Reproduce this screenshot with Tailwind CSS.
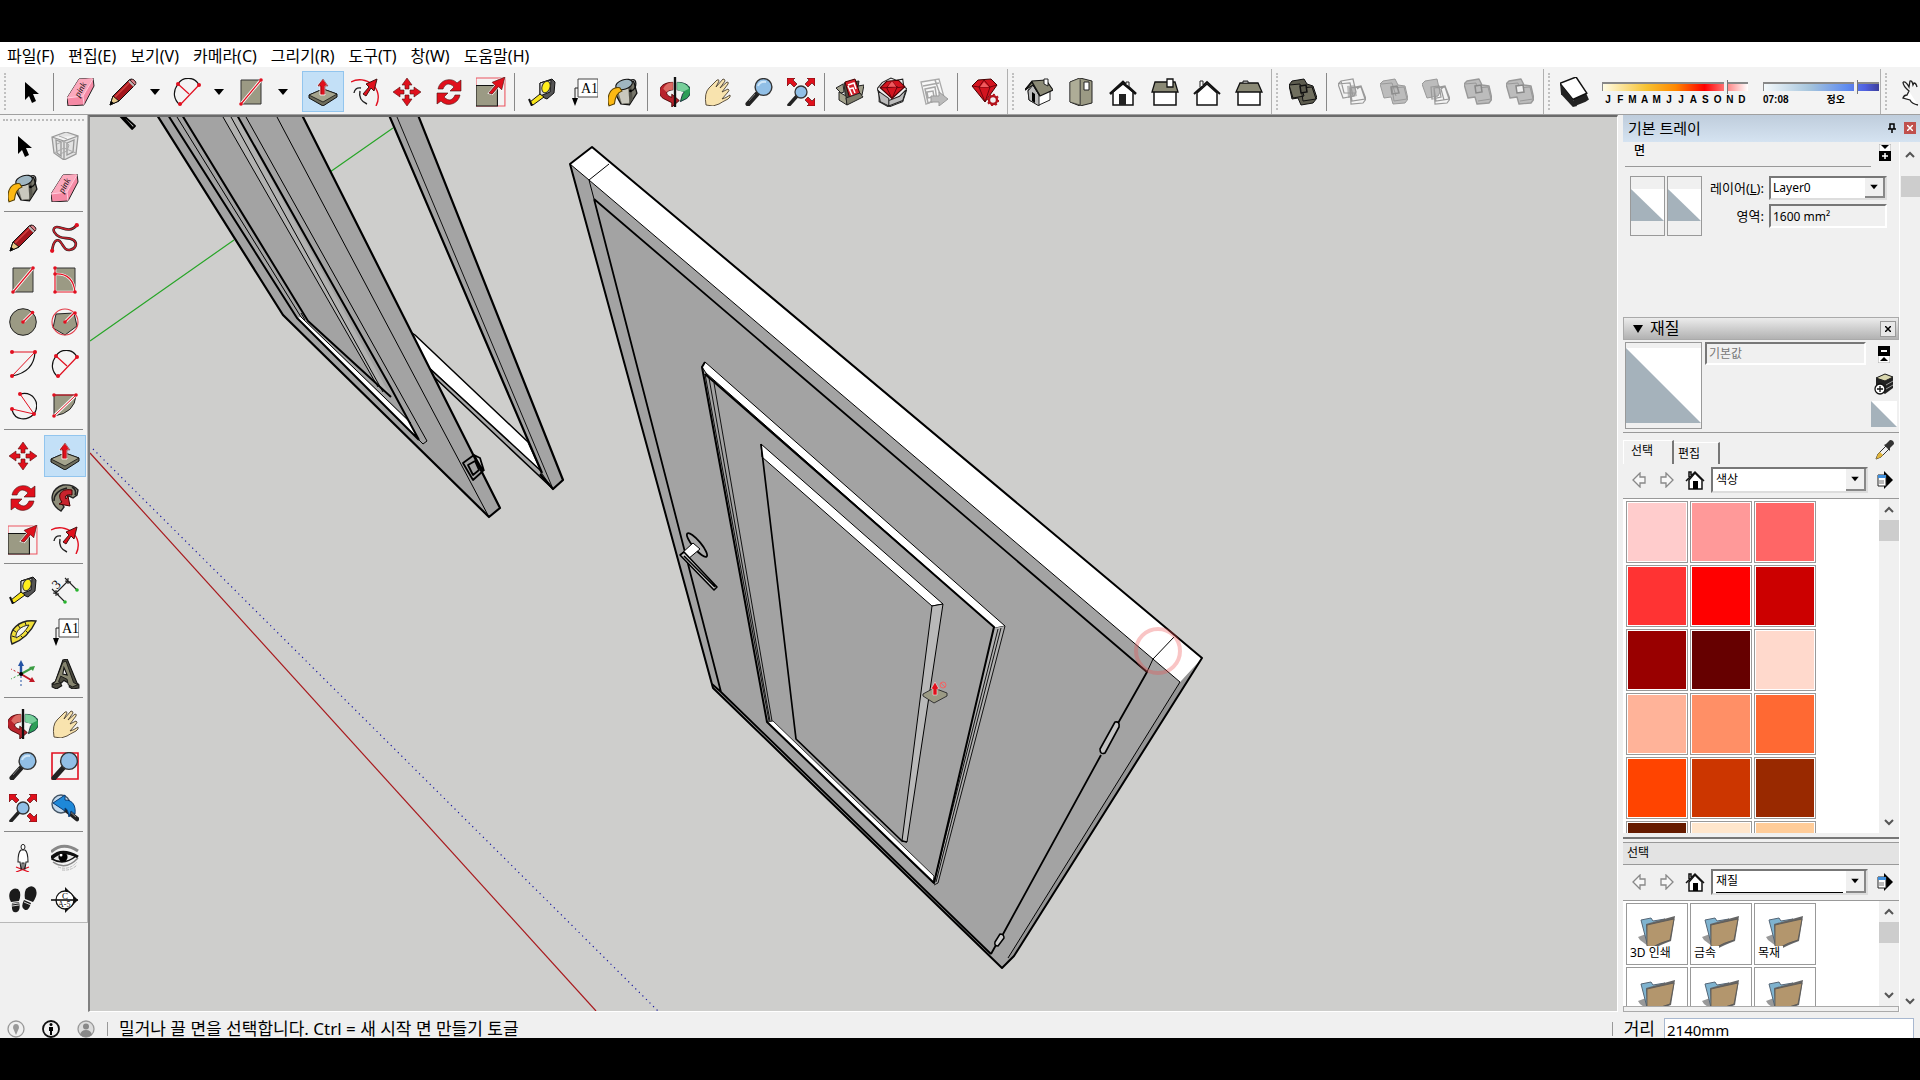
<!DOCTYPE html>
<html lang="ko">

<head>
    <meta charset="UTF-8">
    <meta name="viewport" content="width=device-width, initial-scale=1.0">
    <title>SketchUp</title>
    <script src="https://cdn.jsdelivr.net/npm/@tailwindcss/browser@4"></script>
</head>

<body class="h-screen flex flex-col overflow-hidden bg-black text-black font-['Noto_Sans','Noto_Sans_CJK_KR',sans-serif]">
    <!-- Icon set -->
    <svg class="hidden">
        <symbol id="cursor" viewBox="0 0 28 28"><path d="M9 4v18l4-4 3 7 4-2-3-7h6z" fill="#000" /></symbol>
        <symbol id="eraser" viewBox="0 0 28 28">
            <path d="M12 1l14-1 1 8-10 19-16 1-1-8z" fill="#f58aa5" stroke="#222" stroke-linejoin="round" />
            <path d="M12 1l14 -1-10 18-16 2z" fill="#fba9bd" /><path d="M0 20l16-2 1 9" fill="none" stroke="#fcd" />
            <path d="M16 18l10-17" stroke="#fcd" />
            <text x="7" y="17" font-size="9" font-style="italic" font-family="Liberation Serif" transform="rotate(-62 12 14)">pink</text>
        </symbol>
        <symbol id="pencil" viewBox="0 0 28 28">
            <path d="M1 27l3-9 16-16q2-2 5 0t1 5L10 23z" fill="#a3161d" stroke="#111" stroke-linejoin="round" />
            <path d="M1 27l3-9 6 5z" fill="#e8ca8b" stroke="#111" /><path d="M1 27l1-4 3 2z" /><path d="M6 19L20 5" stroke="#d4403f" stroke-width="1.500" />
            <path d="M20 3l5 5" stroke="#bbb" stroke-width="2" /><path d="M21 2q3-2 5 1t0 4z" fill="#dd838a" stroke="#111" stroke-width=".6" />
        </symbol>
        <symbol id="freehand" viewBox="0 0 28 28">
            <path d="M2 26C3 16 7 14 10 18s4 8 9 7 7-6 3-9-9-1-13-3S1 6 5 4s13 7 20-2" fill="none" stroke="#222" stroke-width="2.400" />
            <path d="M2 26C3 16 7 14 10 18s4 8 9 7 7-6 3-9-9-1-13-3S1 6 5 4s13 7 20-2" fill="none" stroke="#c4202b" stroke-width="1.400" />
            <circle cx="2" cy="26" r="2" fill="#e11020" /><circle cx="25" cy="2" r="2" fill="#e11020" />
        </symbol>
        <symbol id="arc2" viewBox="0 0 28 28">
            <path d="M5 6A12 12 0 0 1 26 7M5 6C-1 14 1 22 7 27" fill="none" stroke="#111" stroke-width="1.2" />
            <path d="M5 6l11 10M26 7L7 27" stroke="#e11020" stroke-width="1.2" />
            <circle cx="5" cy="6" r="2" fill="#e11020" /><circle cx="26" cy="7" r="2" fill="#e11020" /><circle cx="7" cy="26" r="2" fill="#e11020" />
        </symbol>
        <symbol id="rect" viewBox="0 0 28 28">
            <path d="M4 2h20v24H4z" fill="#9b9a84" stroke="#333" /><path d="M4 26L24 2" stroke="#fff" stroke-width="3" /><path d="M4 26L24 2" stroke="#e11020" stroke-width="1.2" />
            <circle cx="4" cy="26" r="1.8" fill="#e11020" /><circle cx="24" cy="2" r="1.8" fill="#e11020" />
        </symbol>
        <symbol id="rotrect" viewBox="0 0 28 28">
            <path d="M4 2h20v24H4z" fill="#9b9a84" stroke="#333" /><path d="M4 2v24h20M4 8q18-1 20 18" fill="none" stroke="#fff" stroke-width="2.6" /><path d="M4 2v24h20M4 8q18-1 20 18" fill="none" stroke="#e11020" stroke-width="1.2" />
            <g fill="#e11020"><circle cx="4" cy="2" r="1.8" /><circle cx="4" cy="8" r="1.8" /><circle cx="4" cy="26" r="1.8" /><circle cx="24" cy="26" r="1.8" /></g>
        </symbol>
        <symbol id="circle" viewBox="0 0 28 28">
            <circle cx="14" cy="14" r="13.3" fill="#9b9a84" stroke="#222" /><path d="M14 14l9-9" stroke="#fff" stroke-width="3" /><path d="M14 14l9-9" stroke="#e11020" stroke-width="1.3" />
            <circle cx="14" cy="14" r="1.8" fill="#e11020" /><circle cx="23.500" cy="4.500" r="1.8" fill="#e11020" />
        </symbol>
        <symbol id="polygon" viewBox="0 0 28 28">
            <path d="M23 5l3 13-12 9-12-7L5 6z" fill="#9b9a84" stroke="#222" /><circle cx="14" cy="14" r="13" fill="none" stroke="#e33b48" stroke-width="1.1" />
            <path d="M14 14l9-9" stroke="#fff" stroke-width="3" /><path d="M14 14l9-9" stroke="#e11020" stroke-width="1.3" /><circle cx="14" cy="14" r="1.8" fill="#e11020" /><circle cx="24" cy="5" r="1.8" fill="#e11020" />
        </symbol>
        <symbol id="arc1" viewBox="0 0 28 28">
            <path d="M26 2Q25 22 3 26" fill="none" stroke="#111" stroke-width="1.2" /><path d="M3 2h23L3 26" fill="none" stroke="#e11020" />
            <g fill="#e11020"><circle cx="3" cy="2" r="2" /><circle cx="26" cy="2" r="2" /><circle cx="3" cy="26" r="2" /></g>
        </symbol>
        <symbol id="arc3" viewBox="0 0 28 28">
            <path d="M11 2C24-1 32 11 25 22M25 22C18 29 6 29 3 18" fill="none" stroke="#111" stroke-width="1.2" /><path d="M11 2l14 20L3 17" fill="none" stroke="#e11020" />
            <g fill="#e11020"><circle cx="11" cy="2" r="2" /><circle cx="25" cy="22" r="2" /><circle cx="3" cy="17" r="2" /></g>
        </symbol>
        <symbol id="pie" viewBox="0 0 28 28">
            <path d="M3 3h22Q24 21 3 24z" fill="#9b9a84" stroke="#222" /><path d="M3 24L25 3" stroke="#fff" stroke-width="3" /><path d="M25 3H3M3 24L25 3" fill="none" stroke="#e11020" />
            <g fill="#e11020"><circle cx="3" cy="3" r="1.8" /><circle cx="25" cy="3" r="1.8" /><circle cx="3" cy="24" r="1.8" /></g>
        </symbol>
        <symbol id="pushpull" viewBox="0 0 28 28">
            <path d="M0 17l14-6 14 5v3L14 28 0 20z" fill="#6e6d5c" stroke="#111" stroke-linejoin="round" /><path d="M0 17l14-6 14 5-14 8z" fill="#a5a48d" stroke="#111" stroke-width=".8" />
            <path d="M14 1l5 7h-3v9h-5V8H8z" fill="#e0101c" stroke="#fff" stroke-width=".8" /><path d="M14 1l5 7h-3v8M14 1L9 8h3v8" fill="none" stroke="#500" stroke-width=".5" />
        </symbol>
        <symbol id="offset" viewBox="0 0 28 28">
            <path d="M0 4C14-4 34 10 25 28" fill="none" stroke="#e11020" stroke-width="1.4" /><path d="M3 15q1-6 7-5M9 13q-2 9 7 13" fill="none" stroke="#222" stroke-width="1.400" />
            <path d="M12 16l6-7-3-3 11-5-3 12-3-3-5 8z" fill="#e0101c" stroke="#411" />
        </symbol>
        <symbol id="move" viewBox="0 0 28 28">
            <path d="M14 0l5 7h-3v4h-4V7H9zM14 28l5-7h-3v-4h-4v4H9zM0 14l7-5v3h4v4H7v3zM28 14l-7-5v3h-4v4h4v3z" fill="#e0101c" stroke="#511" stroke-width=".6" />
        </symbol>
        <symbol id="rotate" viewBox="0 0 28 28">
            <path d="M3 11C5 1 17-1 22 5l4-3v11H15l4-4C14 4 10 6 8 11z" fill="#e0101c" stroke="#411" stroke-width=".6" />
            <path d="M25 17C23 27 11 29 6 23l-4 3V15h11l-4 4c5 5 9 3 11-2z" fill="#e0101c" stroke="#411" stroke-width=".6" />
        </symbol>
        <symbol id="followme" viewBox="0 0 28 28">
            <path d="M7 25C-4 15 2 4 12 1q10-1 15 5l-1 5-4 3q-8-5-11 1-1 4 2 8l-3 4z" fill="#8f8e7a" stroke="#222" stroke-width="1.400" />
            <path d="M3 17q0-10 13-13M21 3q5 3 3 8" fill="none" stroke="#222" stroke-width="1.500" />
            <path d="M21 6C9 4 6 12 11 18l-3 2 11 2-2-10-2 3c-2-3 1-5 6-4z" fill="#c8222c" stroke="#400" />
        </symbol>
        <symbol id="scale" viewBox="0 0 28 28">
            <path d="M0 1h27v26H0z" fill="none" stroke="#ec5560" /><path d="M0 8h20v19H0z" fill="#9b9a84" stroke="#111" /><path d="M12 15l6-7-3-3 12-5-3 12-3-3-6 7z" fill="#e0101c" stroke="#fff" stroke-width="1.6" /><path d="M12 15l6-7-3-3 12-5-3 12-3-3-6 7z" fill="#e0101c" stroke="#411" stroke-width=".6" />
        </symbol>
        <symbol id="tape" viewBox="0 0 28 28">
            <path d="M12 5l12-4 3 3-1 11-7 6-7-3z" fill="#555" stroke="#111" /><path d="M12 5l11-3-1 12-10 4z" fill="#ddd" stroke="#111" /><ellipse cx="18" cy="9" rx="4" ry="6" fill="#ffee1d" stroke="#333" transform="rotate(18 18 9)" />
            <path d="M12 16l4 3L5 27l-3-3z" fill="#f9e51c" stroke="#111" /><path d="M1 21l3 7" stroke="#111" stroke-width="2" />
        </symbol>
        <symbol id="dimension" viewBox="0 0 28 28">
            <path d="M5 17L17 5M1 13l12 12M14 2l12 12M2 17l6 1M5 14v6M14 5l6 1M17 2v6" stroke="#222" stroke-width="1.1" /><circle cx="14" cy="26" r="1.800" fill="#27b42d" /><circle cx="26" cy="14" r="1.800" fill="#27b42d" />
            <text x="2" y="12" font-size="13" font-family="Liberation Serif" transform="rotate(-45 6 8)">3</text>
        </symbol>
        <symbol id="protractor" viewBox="0 0 28 28">
            <path d="M3 26C-2 12 10 1 27 3 22 14 14 22 3 26z" fill="#f0df3a" stroke="#222" stroke-width="1.4" /><path d="M7 20C6 13 12 8 20 7q-5 9-13 13z" fill="#f4f4f4" stroke="#222" /><path d="M3 18l3 1M4 12l3 2M9 7l2 3M16 4l1 3M12 18l2 2M17 13l2 2" stroke="#222" />
        </symbol>
        <symbol id="label" viewBox="0 0 28 28">
            <path d="M8 1h20v18H8z" fill="#fff" stroke="#444" /><text x="11" y="15" font-size="14" font-family="Liberation Serif">A1</text><path d="M8 10H5v11" fill="none" stroke="#222" /><path d="M2 20h6l-3 8z" />
        </symbol>
        <symbol id="axes" viewBox="0 0 28 28">
            <path d="M12 14V4" stroke="#2453a4" stroke-width="2.400" /><path d="M12 0l3 6H9z" fill="#2453a4" /><path d="M12 14l11-6" stroke="#3a9c42" stroke-width="2" /><path d="M26 6l-2 5-4-4z" fill="#3a9c42" /><path d="M12 14l10 6" stroke="#c01824" stroke-width="2" /><path d="M26 22l-6 0 3-5z" fill="#c01824" />
            <path d="M12 16v10" stroke="#2453a4" stroke-dasharray="2 2" /><path d="M10 15l-8 4" stroke="#3a9c42" stroke-dasharray="2 2" /><path d="M10 13L2 9" stroke="#c01824" stroke-dasharray="2 2" /><circle cx="12" cy="14" r="2" />
        </symbol>
        <symbol id="text3d" viewBox="0 0 28 28">
            <path d="M2 26v-3l3-2 6-17 1-3 4-1 9 22 2 2v3l-6 1-3-2v-3l-5-3-3 3 1 2-5 3z" fill="#4c4b40" stroke="#111" /><path d="M2 24l3-3 7-18 3-1 7 20 4 2-5 2-4-2-1-5-6-3-2 5 2 1z" fill="#86856f" stroke="#111" stroke-width=".8" /><path d="M13 8l3 7-4-1z" fill="#f4f4f4" stroke="#111" />
        </symbol>
        <symbol id="bucket" viewBox="0 0 28 28">
            <path d="M8 7l16-3 3 11-7 11-8-1-5-9z" fill="#77766a" stroke="#111" stroke-width="1.200" /><path d="M9 12q6 1 13-4l-2 16-7 1z" fill="#c9c8bd" /><path d="M19 10l3-2 1 13-3 4z" fill="#55544b" />
            <ellipse cx="15" cy="7" rx="8" ry="4.500" fill="#9fb6c2" stroke="#111" transform="rotate(-18 15 7)" /><path d="M21 3q5-2 5 3t-4 7" fill="none" stroke="#111" stroke-width="1.200" /><circle cx="21" cy="13" r="1.300" />
            <path d="M1 16Q4 9 11 10l2 3q-6 2-7 12l-5 2q-2-5 0-11z" fill="#fdb913" stroke="#5a4204" />
        </symbol>
        <symbol id="component" viewBox="0 0 28 28">
            <path d="M1 5l14-5 12 4-2 18-12 6L3 21zM1 5l12 4 14-5M13 9v19M5 8l5 2v14l-4-3zM16 11l7-3-1 12-6 3z" fill="#e3e3e3" stroke="#999" stroke-width="1.3" /><path d="M6 12l7-3 5 4-2 6-7 3M8 4l8 3M3 21l10-5 12 5" fill="none" stroke="#aaa" />
        </symbol>
        <symbol id="orbit" viewBox="0 0 28 28">
            <path d="M12 5C-2 5-3 16 3 20l8 4v4l7-6-7-6v3c-6-2-7-6 1-7z" fill="#b8232c" stroke="#400" stroke-width=".8" /><path d="M3 11q3-6 9-6v7q-4 0-6 2z" fill="#dc6a63" />
            <path d="M16 5c14 0 15 10 9 15l-6 3 2-7q4-3-5-4z" fill="#2d9e58" stroke="#123" stroke-width=".8" /><path d="M16 5q8 0 11 6l-6 3-5-2z" fill="#78cf9b" /><path d="M14 0v28" stroke="#111" stroke-width="2.200" />
        </symbol>
        <symbol id="pan" viewBox="0 0 28 28">
            <path d="M3 27Q1 15 6 10L14 2q2-1 2 1l-3 6 7-8q2 0 2 2l-5 7 7-6q2 0 1 2l-6 8 6-3q2 1 0 3l-6 7q4-1 8-4 1 2-2 4-6 3-9 5l-6 2z" fill="#f8e3ae" stroke="#4b4030" stroke-width=".9" />
        </symbol>
        <symbol id="zoom" viewBox="0 0 28 28">
            <path d="M12 16L3 26" stroke="#222" stroke-width="5" stroke-linecap="round" /><path d="M10 16L4 23" stroke="#777" /><circle cx="18.500" cy="9" r="8.400" fill="#91bfe6" stroke="#333" stroke-width="1.400" /><path d="M13 8q2-5 8-4" stroke="#cfe6f8" stroke-width="2" fill="none" />
        </symbol>
        <symbol id="zoomwin" viewBox="0 0 28 28">
            <path d="M1 1h26v26H1z" fill="none" stroke="#e11020" stroke-width="1.6" /><path d="M12 16L3 26" stroke="#222" stroke-width="5" stroke-linecap="round" /><circle cx="18" cy="9" r="8.400" fill="#91bfe6" stroke="#333" stroke-width="1.400" />
        </symbol>
        <symbol id="zoomext" viewBox="0 0 28 28">
            <path d="M10 18L2 27" stroke="#222" stroke-width="3.500" stroke-linecap="round" /><circle cx="14" cy="14" r="6" fill="#91bfe6" stroke="#333" stroke-width="1.300" />
            <path d="M0 0h8L6 2l4 4-3 3-4-4-3 3zM28 0h-8l2 2-4 4 3 3 4-4 3 3zM28 28h-8l2-2-4-4 3-3 4 4 3-3z" fill="#e0101c" stroke="#511" stroke-width=".7" />
        </symbol>
        <symbol id="zoomprev" viewBox="0 0 28 28">
            <circle cx="10" cy="10" r="9" fill="#c3d9ec" stroke="#456" stroke-width="1.400" /><path d="M15 16l11 9" stroke="#222" stroke-width="4.500" stroke-linecap="round" /><path d="M17 16l8 7" stroke="#888" /><path d="M2 9l12-8v5c8 0 11 6 10 14l-4-3-2 6q-1-8-4-9v3z" fill="#1e88d8" stroke="#0a3c75" />
        </symbol>
        <symbol id="warehouse" viewBox="0 0 28 28">
            <path d="M8 5l15-2-3 18-10 4z" fill="#4c4b40" stroke="#222" /><path d="M7 6L0 10l5 5 3-1zM22 8l6-1-2 10-5 2z" fill="#a09f8b" stroke="#222" /><path d="M3 14l7 4 1 9-8-5z" fill="#a5a48d" stroke="#222" /><path d="M9 4l10-3 5 15-10 5z" fill="#d5202b" stroke="#400" /><path d="M12 7l6-2 2 6M13 11l4-1 2 5M12 8l4 9" fill="none" stroke="#fff" stroke-width="1.500" /><path d="M10 20l14-5 3 4-16 8z" fill="#7d7c6a" stroke="#222" />
        </symbol>
        <symbol id="extwarehouse" viewBox="0 0 28 28">
            <path d="M5 5l8-4 5 2 6-1 1 7 3 2-4 12-13 5-9-5V14l-2-3z" fill="#eee" stroke="#222" /><path d="M1 13l10 7v7l-8-4zM27 12l-6 6-10 4v5l13-5z" fill="#bbb" stroke="#222" /><path d="M3 10l6-6 11-1 6 6-12 11z" fill="#d3141f" stroke="#400" /><path d="M3 10l6 0 5-6 5 6 7-1M9 10l5 10 5-11z" fill="none" stroke="#5a0008" stroke-width=".8" /><path d="M10 9l4-5 4 5z" fill="#ef5b5f" />
        </symbol>
        <symbol id="layout" viewBox="0 0 28 28">
            <path d="M1 4l18-3 5 18-18 7z" fill="#f8f8f8" stroke="#aaa" stroke-width="1.300" /><path d="M3 8l16-3M15 2l6 17M5 11l10-2 2 13-9 3zM7 14l6-1 1 6-6 1z" fill="none" stroke="#a7a7a7" stroke-width="1.500" /><path d="M11 18h8v-4l9 7-9 7v-4h-8z" fill="#bbb" stroke="#999" />
        </symbol>
        <symbol id="ruby" viewBox="0 0 28 28">
            <path d="M1 8l6-6 13-1 6 6-12 17z" fill="#d3141f" stroke="#400" /><path d="M1 8l7 1 5-7 6 7 7-2M8 9l6 15 5-15z" fill="none" stroke="#5a0008" stroke-width=".8" /><path d="M9 9l4-5 5 5z" fill="#ef5b5f" />
            <circle cx="22" cy="22" r="4" fill="#eee" stroke="#b3131c" stroke-width="2.400" /><circle cx="22" cy="22" r="5.500" fill="none" stroke="#b3131c" stroke-width="1.500" stroke-dasharray="2 2.200" />
        </symbol>
        <symbol id="iso" viewBox="0 0 28 28">
            <path d="M3 12l11-7 11 6v11l-11 5-10-5z" fill="#fff" stroke="#222" /><path d="M3 13l5-6 6 10v11L4 22z" fill="#bbb" stroke="#222" /><path d="M0 12L7 3l14-1 7 10-13 6-7-11z" fill="#8b8a76" stroke="#111" stroke-width="1.200" /><path d="M0 12l7-8 8 14" fill="none" stroke="#111" stroke-width="1.500" /><path d="M19 1h4v7l-4-2z" fill="#fff" stroke="#222" /><path d="M7 14l3 2v9l-3-2z" />
        </symbol>
        <symbol id="top" viewBox="0 0 28 28"><path d="M3 4l10-4 12 3v22l-12 3-10-4z" fill="#9b9a84" stroke="#222" /><path d="M13 2v26" stroke="#444" /><path d="M3 4l10-4v27L3 24z" fill="#aead97" stroke="#222" stroke-width=".6" /><path d="M17 4h5v8h-5z" fill="#fff" stroke="#222" /></symbol>
        <symbol id="front" viewBox="0 0 28 28"><path d="M4 14v13h20V14L14 6z" fill="#fff" stroke="#111" stroke-width="1.500" /><path d="M1 16L14 4l13 12" fill="none" stroke="#111" stroke-width="2.600" /><path d="M10 16h7v11h-7z" fill="#222" /><path d="M17 6V4h3v4" fill="#eee" stroke="#222" /></symbol>
        <symbol id="right" viewBox="0 0 28 28"><path d="M3 13h22v14H3z" fill="#fff" stroke="#111" stroke-width="1.500" /><path d="M4 4h20l3 10H1z" fill="#8b8a76" stroke="#111" stroke-width="1.300" /><path d="M16 1h6v8h-6z" fill="#fff" stroke="#111" stroke-width="1.300" /></symbol>
        <symbol id="back" viewBox="0 0 28 28"><path d="M4 15v12h20V15L14 6z" fill="#fff" stroke="#111" stroke-width="1.500" /><path d="M1 16L14 4l13 12" fill="none" stroke="#111" stroke-width="2" /><path d="M7 9V3h3v4" fill="#fff" stroke="#222" /></symbol>
        <symbol id="left" viewBox="0 0 28 28"><path d="M3 13h22v14H3z" fill="#fff" stroke="#111" stroke-width="1.500" /><path d="M5 5h18l4 9H1z" fill="#8b8a76" stroke="#111" stroke-width="1.300" /><path d="M8 5V3h5v2" fill="#999" stroke="#222" /></symbol>
        <symbol id="solid" viewBox="0 0 28 28"><path d="M0 7l3-4 12-2 3 5 6 2 4 12-4 5-12 2-3-7-6 1z" fill="#5c5b4e" stroke="#111" stroke-linejoin="round" /><path d="M0 7l11-1 4 12-11 2zM12 10l11-1 4 12-13 2z" fill="#706f5f" stroke="#111" /><path d="M11 8l6-1 1 7-6 1z" fill="#5c5b4e" stroke="#111" stroke-width="1.500" /></symbol>
        <symbol id="solid-a" viewBox="0 0 28 28"><path d="M9 8l8-1 2 11-9 2z" fill="#bbb" /><path d="M0 6l3-3 12-2 3 13-2 4-11 2zM0 6l12-1 3 13M12 10l11-2 5 13-3 4-12 1zM12 10l11-1 4 12-13 2zM3 3l3 12 11 0M23 8l-4 3" fill="none" stroke="#999" stroke-width="1.200" /></symbol>
        <symbol id="solid-b" viewBox="0 0 28 28"><path d="M0 6l3-3 12-2 3 6 7 1 3 13-3 4-12 1-2-7-7 1z" fill="#bcbcbc" stroke="#999" stroke-linejoin="round" /><path d="M1 6l11-1 4 13M12 10l12-1 3 12-13 2z" fill="none" stroke="#9a9a9a" /><path d="M11 9l6-1 2 7-7 1z" fill="none" stroke="#8d8d8d" stroke-width="1.500" /></symbol>
        <symbol id="solid-c" viewBox="0 0 28 28"><path d="M0 6l3-3 12-2 3 13-2 4-11 2z" fill="#bcbcbc" stroke="#999" /><path d="M9 9l8-1 2 11-9 2zM12 10l11-2 5 13-3 4-12 1zM12 10l11-1 4 12-13 2zM23 8l-4 3 3 11" fill="none" stroke="#999" stroke-width="1.200" /></symbol>
        <symbol id="solid-d" viewBox="0 0 28 28"><path d="M0 6l3-3 12-2 3 6 7 1 3 13-3 4-12 1-2-7-7 1z" fill="#bcbcbc" stroke="#999" stroke-width="1.400" stroke-linejoin="round" /><path d="M1 6l11-1 1 5 11-1 3 12-13 2" fill="none" stroke="#999" /><path d="M11 8l6-1 1 7-6 1z" fill="#bcbcbc" stroke="#888" stroke-width="1.500" /></symbol>
        <symbol id="solid-e" viewBox="0 0 28 28"><path d="M0 6l3-3 12-2 3 6 7 1 3 13-3 4-12 1-2-7-7 1z" fill="#bcbcbc" stroke="#999" stroke-width="1.400" stroke-linejoin="round" /><path d="M1 6l11-1 1 5 11-1 3 12-13 2" fill="none" stroke="#999" /><path d="M10 8l7-1 1 7-7 1z" fill="#eee" stroke="#888" stroke-width="1.500" /></symbol>
        <symbol id="shadow" viewBox="0 0 28 28"><path d="M11 17l12-5 4 9-3 2-10 4z" fill="#222" /><path d="M0 6L15 0l10 15-13 6z" fill="#fff" stroke="#111" stroke-width="1.400" /><path d="M0 6l1 10 11 12 4-1-4-6z" fill="#222" /></symbol>
        <symbol id="person" viewBox="0 0 28 28"><path d="M7 23l13 5M20 23L7 28" stroke="#e11020" stroke-width="1.300" /><ellipse cx="14" cy="3" rx="2" ry="2.600" fill="#fff" stroke="#222" /><path d="M12 6q-3 2-3 12l2 0 1 7h1v-6h2v6h1l1-7h2q0-10-3-12z" fill="#fff" stroke="#222" stroke-width="1.100" /></symbol>
        <symbol id="eye" viewBox="0 0 28 28"><path d="M0 8Q12-3 27 7" fill="none" stroke="#888" stroke-width="3" /><path d="M1 15Q10 5 25 12q-12 10-24 3z" fill="#e8e8e8" stroke="#111" stroke-width="1.500" /><circle cx="12" cy="13" r="4.600" /><circle cx="10" cy="11" r="1.500" fill="#fff" /><path d="M0 14Q10 3 27 13" fill="none" stroke="#111" stroke-width="3" /><path d="M2 18q13 9 25-4" fill="none" stroke="#888" stroke-width="1.500" /><path d="M7 23q11 4 19-5M11 26q9 1 15-5" fill="none" stroke="#bbb" stroke-dasharray="3 1" /></symbol>
        <symbol id="walk" viewBox="0 0 28 28"><path d="M1 6q3-5 8-3 4 4 1 12l-8 1q-3-5-1-10zM3 17l7-1q2 8-2 10-6 2-5-9zM17 3q5-5 9-1 4 5-2 14l-8-3q-1-6 1-10zM15 14l7 3q-2 8-6 7-5-2-1-10z" fill="#1b1b1b" /><path d="M3 18l7-1M3 20l7-1M15 16l7 3" stroke="#fff" stroke-width=".8" /></symbol>
        <symbol id="section" viewBox="0 0 28 28"><path d="M14 1l13 13-13 13" fill="#111" /><circle cx="14" cy="14" r="9" fill="#fff" stroke="#111" stroke-width="1.300" /><path d="M0 14h27" stroke="#111" stroke-width="1.600" /><text x="11" y="13" font-size="9" font-family="Liberation Serif">C</text><text x="7" y="21" font-size="8" font-family="Liberation Serif">A-5</text></symbol>
        <symbol id="caret" viewBox="0 0 12 8"><path d="M1 1h10L6 7z" /></symbol>
        <symbol id="up" viewBox="0 0 10 7"><path d="M1 6l4-4 4 4" fill="none" stroke="#555" stroke-width="2" /></symbol>
        <symbol id="down" viewBox="0 0 10 7"><path d="M1 1l4 4 4-4" fill="none" stroke="#555" stroke-width="2" /></symbol>
        <symbol id="nav-back" viewBox="0 0 14 16"><path d="M1 8l7-7v4h5v6H8v4z" fill="#f7f7f7" stroke="#888" stroke-width="1.300" /></symbol>
        <symbol id="nav-next" viewBox="0 0 14 16"><path d="M13 8L6 1v4H1v6h5v4z" fill="#f7f7f7" stroke="#888" stroke-width="1.300" /></symbol>
        <symbol id="home" viewBox="0 0 20 20"><path d="M4 10v9h13v-9l-7-7z" fill="#fff" stroke="#111" stroke-width="1.500" /><path d="M1 11l9-9 9 9M4 7V2h2v3" fill="none" stroke="#111" stroke-width="1.500" /><path d="M8 11h5v8H8z" /></symbol>
        <symbol id="detail" viewBox="0 0 16 18"><path d="M7 0l9 9-9 9z" /><path d="M1 4h8v11H1z" fill="#fff" stroke="#222" /><path d="M1 4h8v3H1z" fill="#3f8fdc" /><path d="M2 10h5M2 12h5" stroke="#777" /></symbol>
        <symbol id="folder" viewBox="0 0 40 34">
            <path d="M1 21l8-3 2 12-8-6z" fill="#999" /><path d="M4 4l10-2 2 3 12-2-17 8v20z" fill="#7fb3cf" stroke="#567" /><path d="M9 8l29-8-4 25q-11 4-18 8l-6-1z" fill="#666" /><path d="M10 9l27-6-4 21q-11 3-17 7l-6-1z" fill="#b3966d" stroke="#555" stroke-width=".8" />
        </symbol>
    </svg>

    <div class="h-[42px] shrink-0 bg-black"></div>

    <!-- Menu bar -->
    <nav class="h-[25px] shrink-0 bg-white flex items-center pl-[7px] pt-[2px] gap-[14px] text-base leading-5 whitespace-nowrap">
        <button>파일(F)</button>
        <button>편집(E)</button>
        <button>보기(V)</button>
        <button>카메라(C)</button>
        <button>그리기(R)</button>
        <button>도구(T)</button>
        <button>창(W)</button>
        <button>도움말(H)</button>
    </nav>

    <!-- Toolbars -->
    <div class="h-[48px] shrink-0 pt-[2px] bg-[#f3f3f3] border-b border-[#a0a0a0] flex items-stretch overflow-hidden">
        <div class="flex items-center shrink-0 w-[1008px] border-r border-[#b0b0b0]">
            <span class="w-[9px] pl-1 self-stretch py-1 shrink-0"><span class="block h-full border-l-2 border-dotted border-[#c0c0c0]"></span></span>
            <button aria-label="선택" class="w-[42px] h-[41px] shrink-0 grid place-items-center"><svg class="size-7"><use href="#cursor" /></svg></button>
            <span class="w-[9px] pl-[2px] shrink-0"><span class="block h-[38px] border-l border-[#888]"></span></span>
            <button aria-label="지우개" class="w-[42px] h-[41px] shrink-0 grid place-items-center"><svg class="size-7"><use href="#eraser" /></svg></button>
            <button aria-label="선" class="w-[42px] h-[41px] shrink-0 grid place-items-center"><svg class="size-7"><use href="#pencil" /></svg></button>
            <button aria-label="선 도구" class="w-[22px] h-[41px] shrink-0 grid place-items-center"><svg class="w-3 h-2"><use href="#caret" /></svg></button>
            <button aria-label="호" class="w-[42px] h-[41px] shrink-0 grid place-items-center"><svg class="size-7"><use href="#arc2" /></svg></button>
            <button aria-label="호 도구" class="w-[22px] h-[41px] shrink-0 grid place-items-center"><svg class="w-3 h-2"><use href="#caret" /></svg></button>
            <button aria-label="직사각형" class="w-[42px] h-[41px] shrink-0 grid place-items-center"><svg class="size-7"><use href="#rect" /></svg></button>
            <button aria-label="도형 도구" class="w-[30px] h-[41px] pr-2 shrink-0 grid place-items-center"><svg class="w-3 h-2"><use href="#caret" /></svg></button>
            <button aria-label="밀기/끌기" class="w-[42px] h-[41px] shrink-0 grid place-items-center bg-[#c3e0f7] border border-[#92c5ee]"><svg class="w-[30px] h-7"><use href="#pushpull" /></svg></button>
            <button aria-label="오프셋" class="w-[42px] h-[41px] shrink-0 grid place-items-center"><svg class="size-7"><use href="#offset" /></svg></button>
            <button aria-label="이동" class="w-[42px] h-[41px] shrink-0 grid place-items-center"><svg class="size-7"><use href="#move" /></svg></button>
            <button aria-label="회전" class="w-[42px] h-[41px] shrink-0 grid place-items-center"><svg class="size-7"><use href="#rotate" /></svg></button>
            <button aria-label="배율" class="w-[42px] h-[41px] shrink-0 grid place-items-center"><svg class="size-[30px]"><use href="#scale" /></svg></button>
            <span class="w-[9px] pl-[2px] shrink-0"><span class="block h-[38px] border-l border-[#888]"></span></span>
            <button aria-label="줄자" class="w-[42px] h-[41px] shrink-0 grid place-items-center"><svg class="size-7"><use href="#tape" /></svg></button>
            <button aria-label="텍스트" class="w-[42px] h-[41px] shrink-0 grid place-items-center"><svg class="size-7"><use href="#label" /></svg></button>
            <button aria-label="페인트통" class="w-[40px] h-[41px] pr-1 shrink-0 grid place-items-center"><svg class="size-[30px]"><use href="#bucket" /></svg></button>
            <span class="w-[9px] pl-[2px] shrink-0"><span class="block h-[38px] border-l border-[#888]"></span></span>
            <button aria-label="궤도" class="w-[42px] h-[41px] shrink-0 grid place-items-center"><svg class="size-[30px]"><use href="#orbit" /></svg></button>
            <button aria-label="이동 보기" class="w-[42px] h-[41px] shrink-0 grid place-items-center"><svg class="size-7"><use href="#pan" /></svg></button>
            <button aria-label="확대/축소" class="w-[42px] h-[41px] shrink-0 grid place-items-center"><svg class="size-7"><use href="#zoom" /></svg></button>
            <button aria-label="범위 확대/축소" class="w-[42px] h-[41px] shrink-0 grid place-items-center"><svg class="size-7"><use href="#zoomext" /></svg></button>
            <span class="w-[7px] pl-[2px] shrink-0"><span class="block h-[38px] border-l border-[#888]"></span></span>
            <button aria-label="3D Warehouse" class="w-[42px] h-[41px] shrink-0 grid place-items-center"><svg class="size-7"><use href="#warehouse" /></svg></button>
            <button aria-label="Extension Warehouse" class="w-[42px] h-[41px] shrink-0 grid place-items-center"><svg class="size-[30px]"><use href="#extwarehouse" /></svg></button>
            <button aria-label="LayOut" class="w-[42px] h-[41px] shrink-0 grid place-items-center"><svg class="size-7"><use href="#layout" /></svg></button>
            <span class="w-[9px] pl-[2px] shrink-0"><span class="block h-[38px] border-l border-[#888]"></span></span>
            <button aria-label="확장 관리자" class="w-[42px] h-[41px] shrink-0 grid place-items-center"><svg class="size-7"><use href="#ruby" /></svg></button>
        </div>
        <div class="flex items-center shrink-0 w-[264px] border-r border-[#b0b0b0]">
            <span class="w-[10px] pl-1 self-stretch py-1 shrink-0"><span class="block h-full border-l-2 border-dotted border-[#c0c0c0]"></span></span>
            <button aria-label="등각" class="w-[42px] h-[41px] shrink-0 grid place-items-center"><svg class="size-7"><use href="#iso" /></svg></button>
            <button aria-label="위" class="w-[42px] h-[41px] shrink-0 grid place-items-center"><svg class="size-7"><use href="#top" /></svg></button>
            <button aria-label="앞" class="w-[42px] h-[41px] shrink-0 grid place-items-center"><svg class="size-7"><use href="#front" /></svg></button>
            <button aria-label="오른쪽" class="w-[42px] h-[41px] shrink-0 grid place-items-center"><svg class="size-7"><use href="#right" /></svg></button>
            <button aria-label="뒤" class="w-[42px] h-[41px] shrink-0 grid place-items-center"><svg class="size-7"><use href="#back" /></svg></button>
            <button aria-label="왼쪽" class="w-[42px] h-[41px] shrink-0 grid place-items-center"><svg class="size-7"><use href="#left" /></svg></button>
        </div>
        <div class="flex items-center shrink-0 w-[272px] border-r border-[#b0b0b0]">
            <span class="w-[10px] pl-1 self-stretch py-1 shrink-0"><span class="block h-full border-l-2 border-dotted border-[#c0c0c0]"></span></span>
            <button aria-label="외부 쉘" class="w-[42px] h-[41px] shrink-0 grid place-items-center"><svg class="size-7"><use href="#solid" /></svg></button>
            <span class="w-[7px] pl-[2px] shrink-0"><span class="block h-[38px] border-l border-[#888]"></span></span>
            <button aria-label="교차" class="w-[42px] h-[41px] shrink-0 grid place-items-center"><svg class="size-7"><use href="#solid-a" /></svg></button>
            <button aria-label="결합" class="w-[42px] h-[41px] shrink-0 grid place-items-center"><svg class="size-7"><use href="#solid-b" /></svg></button>
            <button aria-label="빼기" class="w-[42px] h-[41px] shrink-0 grid place-items-center"><svg class="size-7"><use href="#solid-c" /></svg></button>
            <button aria-label="자르기" class="w-[42px] h-[41px] shrink-0 grid place-items-center"><svg class="size-7"><use href="#solid-d" /></svg></button>
            <button aria-label="분할" class="w-[42px] h-[41px] shrink-0 grid place-items-center"><svg class="size-7"><use href="#solid-e" /></svg></button>
        </div>
        <!-- Shadow settings -->
        <div class="flex items-center shrink-0 w-[337px] border-r border-[#b0b0b0] overflow-hidden">
            <span class="w-[10px] pl-1 self-stretch py-1 shrink-0"><span class="block h-full border-l-2 border-dotted border-[#c0c0c0]"></span></span>
            <button aria-label="그림자" class="w-[42px] h-[41px] shrink-0 grid place-items-center"><svg class="size-[30px]"><use href="#shadow" /></svg></button>
            <div class="w-[146px] ml-[6px] pt-1 shrink-0">
                <input type="range" aria-label="날짜" value="86" class="block appearance-none w-full h-[9px] border-t-2 border-l border-[#888] bg-[linear-gradient(90deg,#fffce6,#f6c232_30%,#f80_50%,#f00_70%,#fff)] [&::-webkit-slider-thumb]:appearance-none [&::-webkit-slider-thumb]:w-1 [&::-webkit-slider-thumb]:h-[14px] [&::-webkit-slider-thumb]:bg-[#f0f0f0] [&::-webkit-slider-thumb]:border-r [&::-webkit-slider-thumb]:border-[#777]">
                <div class="grid grid-cols-12 text-center text-[10px] leading-3 font-bold font-['Liberation_Sans',sans-serif] pt-[3px]">
                    <span>J</span><span>F</span><span>M</span><span>A</span><span>M</span><span>J</span><span>J</span><span>A</span><span>S</span><span>O</span><span>N</span><span>D</span>
                </div>
            </div>
            <div class="w-[116px] ml-[15px] pt-1 shrink-0">
                <input type="range" aria-label="시간" value="81" class="block appearance-none w-full h-[9px] border-t-2 border-l border-[#888] bg-[linear-gradient(90deg,#f4f9fb,#a5c4dc_40%,#5f8cf0_72%,#5060e0_88%,#3d3f9c)] [&::-webkit-slider-thumb]:appearance-none [&::-webkit-slider-thumb]:w-1 [&::-webkit-slider-thumb]:h-[14px] [&::-webkit-slider-thumb]:bg-[#f0f0f0] [&::-webkit-slider-thumb]:border-r [&::-webkit-slider-thumb]:border-[#777]">
                <div class="flex justify-between pr-[34px] text-[10px] leading-3 font-bold font-['Liberation_Sans','Noto_Sans_CJK_KR',sans-serif] pt-[3px]">
                    <span>07:08</span><span>정오</span>
                </div>
            </div>
        </div>
        <div class="flex items-center flex-1 overflow-hidden">
            <span class="w-4 pl-1 self-stretch py-1 shrink-0"><span class="block h-full border-l-2 border-dotted border-[#c0c0c0]"></span></span>
            <button aria-label="상호 작용" class="shrink-0 ml-[5px]">
                <svg class="w-[30px] h-7" viewBox="0 0 30 28"><path d="M1 4q3-1 6 5l1-6q2-1 3 4l1-2q2 0 3 4M1 4q0 4 6 9l-2 4q-3 0-4 3l7 2q2 4 8 5" fill="#fff" stroke="#222" stroke-width="1.300" /></svg>
            </button>
        </div>
    </div>

    <!-- Work area -->
    <div class="flex flex-1 min-h-0 bg-[#f0f0f0]">
        <!-- Large tool set -->
        <aside class="w-[88px] shrink-0">
            <div class="bg-[#f4f4f4] border-r border-b border-[#b8b8b8] flex flex-col pb-[1px]">
                <div class="h-[10px] pt-1 px-[3px]"><div class="border-t-2 border-dotted border-[#bbb]"></div></div>
                <div class="grid grid-cols-[42px_42px] pl-[2px]">
                    <button aria-label="선택" class="h-[42px] grid place-items-center"><svg class="size-7"><use href="#cursor" /></svg></button>
                    <button aria-label="구성요소" class="h-[42px] grid place-items-center"><svg class="size-7"><use href="#component" /></svg></button>
                    <button aria-label="페인트통" class="h-[42px] grid place-items-center"><svg class="size-[30px]"><use href="#bucket" /></svg></button>
                    <button aria-label="지우개" class="h-[42px] grid place-items-center"><svg class="size-7"><use href="#eraser" /></svg></button>
                </div>
                <div class="h-2 pt-[2px] px-1"><div class="border-t border-[#888]"></div></div>
                <div class="grid grid-cols-[42px_42px] pl-[2px]">
                    <button aria-label="선" class="h-[42px] grid place-items-center"><svg class="size-7"><use href="#pencil" /></svg></button>
                    <button aria-label="자유곡선" class="h-[42px] grid place-items-center"><svg class="size-[30px]"><use href="#freehand" /></svg></button>
                    <button aria-label="직사각형" class="h-[42px] grid place-items-center"><svg class="size-7"><use href="#rect" /></svg></button>
                    <button aria-label="회전된 직사각형" class="h-[42px] grid place-items-center"><svg class="size-7"><use href="#rotrect" /></svg></button>
                    <button aria-label="원" class="h-[42px] grid place-items-center"><svg class="size-7"><use href="#circle" /></svg></button>
                    <button aria-label="다각형" class="h-[42px] grid place-items-center"><svg class="size-7"><use href="#polygon" /></svg></button>
                    <button aria-label="호" class="h-[42px] grid place-items-center"><svg class="size-7"><use href="#arc1" /></svg></button>
                    <button aria-label="2점 호" class="h-[42px] grid place-items-center"><svg class="size-7"><use href="#arc2" /></svg></button>
                    <button aria-label="3점 호" class="h-[42px] grid place-items-center"><svg class="size-7"><use href="#arc3" /></svg></button>
                    <button aria-label="파이" class="h-[42px] grid place-items-center"><svg class="size-7"><use href="#pie" /></svg></button>
                </div>
                <div class="h-2 pt-[2px] px-1"><div class="border-t border-[#888]"></div></div>
                <div class="grid grid-cols-[42px_42px] pl-[2px]">
                    <button aria-label="이동" class="h-[42px] grid place-items-center"><svg class="size-7"><use href="#move" /></svg></button>
                    <button aria-label="밀기/끌기" class="h-[42px] grid place-items-center bg-[#c3e0f7] border border-[#92c5ee]"><svg class="w-[30px] h-7"><use href="#pushpull" /></svg></button>
                    <button aria-label="회전" class="h-[42px] grid place-items-center"><svg class="size-7"><use href="#rotate" /></svg></button>
                    <button aria-label="따라가기" class="h-[42px] grid place-items-center"><svg class="size-7"><use href="#followme" /></svg></button>
                    <button aria-label="배율" class="h-[42px] grid place-items-center"><svg class="size-[30px]"><use href="#scale" /></svg></button>
                    <button aria-label="오프셋" class="h-[42px] grid place-items-center"><svg class="size-7"><use href="#offset" /></svg></button>
                </div>
                <div class="h-2 pt-[2px] px-1"><div class="border-t border-[#888]"></div></div>
                <div class="grid grid-cols-[42px_42px] pl-[2px]">
                    <button aria-label="줄자" class="h-[42px] grid place-items-center"><svg class="size-7"><use href="#tape" /></svg></button>
                    <button aria-label="치수" class="h-[42px] grid place-items-center"><svg class="size-7"><use href="#dimension" /></svg></button>
                    <button aria-label="각도기" class="h-[42px] grid place-items-center"><svg class="size-7"><use href="#protractor" /></svg></button>
                    <button aria-label="텍스트" class="h-[42px] grid place-items-center"><svg class="size-7"><use href="#label" /></svg></button>
                    <button aria-label="축" class="h-[42px] grid place-items-center"><svg class="size-7"><use href="#axes" /></svg></button>
                    <button aria-label="3D 텍스트" class="h-[42px] grid place-items-center"><svg class="size-[30px]"><use href="#text3d" /></svg></button>
                </div>
                <div class="h-2 pt-[2px] px-1"><div class="border-t border-[#888]"></div></div>
                <div class="grid grid-cols-[42px_42px] pl-[2px]">
                    <button aria-label="궤도" class="h-[42px] grid place-items-center"><svg class="size-[30px]"><use href="#orbit" /></svg></button>
                    <button aria-label="이동 보기" class="h-[42px] grid place-items-center"><svg class="size-7"><use href="#pan" /></svg></button>
                    <button aria-label="확대/축소" class="h-[42px] grid place-items-center"><svg class="size-7"><use href="#zoom" /></svg></button>
                    <button aria-label="창 확대/축소" class="h-[42px] grid place-items-center"><svg class="size-7"><use href="#zoomwin" /></svg></button>
                    <button aria-label="범위 확대/축소" class="h-[42px] grid place-items-center"><svg class="size-7"><use href="#zoomext" /></svg></button>
                    <button aria-label="이전" class="h-[42px] grid place-items-center"><svg class="size-7"><use href="#zoomprev" /></svg></button>
                </div>
                <div class="h-2 pt-[2px] px-1"><div class="border-t border-[#888]"></div></div>
                <div class="grid grid-cols-[42px_42px] pl-[2px]">
                    <button aria-label="카메라 배치" class="h-[42px] grid place-items-center"><svg class="size-7"><use href="#person" /></svg></button>
                    <button aria-label="둘러보기" class="h-[42px] grid place-items-center"><svg class="size-7"><use href="#eye" /></svg></button>
                    <button aria-label="걷기" class="h-[42px] grid place-items-center"><svg class="size-7"><use href="#walk" /></svg></button>
                    <button aria-label="단면" class="h-[42px] grid place-items-center"><svg class="size-7"><use href="#section" /></svg></button>
                </div>
            </div>
        </aside>

        <!-- Model view -->
        <main class="flex-1 min-w-0 border-l-2 border-t-2 border-l-[#808080] border-t-[#6a6a6a] border-r border-b border-r-white border-b-white bg-[#cececc]">
            <svg class="w-full h-full block" viewBox="90 117 1527 894" preserveAspectRatio="xMinYMin slice" stroke-linejoin="round">
                <!-- Axes -->
                <path d="M90 341L234 240M330 172L393 128" stroke="#27a527" stroke-width="1.200" />
                <path d="M90 453L596 1011" stroke="#a8181c" stroke-width="1.200" />
                <path d="M93 449L658 1011" stroke="#1818a0" stroke-width="1.200" stroke-dasharray="1.200 3.800" />
                <!-- Far frame -->
                <path d="M409 331L415 335 528 442 542 473 427 366z" fill="#fff" stroke="#000" stroke-width="1.500" />
                <path d="M427 366L540 470 553 489 433 376z" fill="#a8a8a8" stroke="#000" stroke-width="1.500" />
                <path d="M389 117L528 442 542 473 553 489 563 480 418 117z" fill="#a4a4a4" />
                <path d="M389 115L542 473M418 115L563 480 553 489 540 474" fill="none" stroke="#000" stroke-width="2.200" />
                <path d="M397 117L553 489" stroke="#000" stroke-width=".9" />
                <path d="M119 115L132 129 135 126 123 115M121 115L133 128" fill="none" stroke="#000" stroke-width="1.800" />
                <!-- Door leaf on the left -->
                <path d="M157 115L283 315 489 517 500 508 302 115z" fill="#a3a3a3" stroke="#000" stroke-width="2.200" />
                <path d="M223 117L378 387 391 397 237 117z" fill="#b2b2b1" />
                <path d="M297 318L301 317 411 424 419 440z" fill="#fff" />
                <path d="M168 115L297 318 419 440M182 115L308 321 391 397M237 115L391 388 419 440" fill="none" stroke="#000" stroke-width="2" />
                <path d="M177 117L301 317 411 423M223 117L378 387M231 117L383 392M246 117L427 441 423 444 419 440M277 117L489 517M301 313L305 320" fill="none" stroke="#000" />
                <path d="M463 463L474 455 483 471 473 480zM468 465L475 461 479 470 473 475zM474 455L480 458 484 471" fill="none" stroke="#000" stroke-width="1.800" />
                <!-- Door with frame -->
                <path d="M570 164L1180 682 1002 968 712 687z" fill="#a3a3a3" />
                <path d="M1180 682L1202 658 1014 956 1002 968z" fill="#959595" />
                <path d="M570 164L592 147 1202 658 1180 682 589 180z" fill="#fff" />
                <path d="M570 164L592 147 1202 658 1014 956 1002 968 713 688z" fill="none" stroke="#000" stroke-width="2" />
                <path d="M570 164L589 180 1180 682 1008 958M589 180L609 164M589 180L594 199M1153 659L1174 637M1153 659L1147 672" fill="none" stroke="#000" />
                <path d="M594 199L721 692 991 954M594 199L1147 672 1117 725M1101 755L1002 936M996 945L991 954M712 684L721 692" fill="none" stroke="#000" stroke-width="1.800" />
                <path d="M1115 722q5-1 4 5l-14 26q-5 2-5-4z" fill="#c4c4c4" stroke="#000" stroke-width="1.600" />
                <path d="M1000 934q4 0 4 4l-6 8q-4 0-3-4z" fill="#ccc" stroke="#000" stroke-width="1.500" />
                <!-- Outer moulding -->
                <path d="M702 367L705 362 1005 626 995 628 706 373z" fill="#fff" stroke="#000" />
                <path d="M994 628L1005 626 938 883 933 881z" fill="#b0b0b0" />
                <path d="M767 722L773 721 934 876 933 883z" fill="#fff" stroke="#000" stroke-width=".8" />
                <path d="M705 362L702 367 767 722 934 883 994 627 705 374" fill="none" stroke="#000" stroke-width="2" />
                <path d="M705 374L769 721M714 383L772 721M709 378L770 721M1005 626L938 883 934 885M1001 628L936 882M998 629L934 882" fill="none" stroke="#000" stroke-width=".9" />
                <!-- Inner panel -->
                <path d="M761 444L943 604 932 606 762 457z" fill="#fff" stroke="#000" />
                <path d="M932 606L943 604 907 842 902 841z" fill="#b9b9b9" stroke="#000" />
                <path d="M761 444L796 739 902 841 907 842" fill="none" stroke="#000" stroke-width="1.700" />
                <!-- Handle -->
                <ellipse cx="697" cy="545" rx="4" ry="15" transform="rotate(-40 697 545)" fill="#aaa" stroke="#000" stroke-width="1.800" />
                <path d="M681 554L693 543 700 549 688 559z" fill="#fff" stroke="#000" />
                <path d="M680 555L684 552 717 587 714 590zM684 556L715 587" fill="#ccc" stroke="#000" stroke-width="1.600" />
                <!-- Click marker and push/pull cursor -->
                <circle cx="1158" cy="651" r="22" fill="none" stroke="#ee5050" stroke-opacity=".33" stroke-width="4" />
                <path d="M923 694L934 688 947 693V696L934 703 923 696z" fill="#9b9a84" stroke="#333" />
                <path d="M935 682L939 689H937V695H933V689H931z" fill="#e0101c" stroke="#fff" stroke-width=".5" />
                <circle cx="943" cy="685" r="3" fill="none" stroke="#e66" /><path d="M941 683L945 687" stroke="#e66" />
            </svg>
        </main>

        <!-- Default tray -->
        <aside class="w-[302px] pl-[5px] shrink-0 flex flex-col text-xs leading-4">
            <header class="h-[27px] shrink-0 bg-linear-to-b from-[#bfcddc] to-[#d5e3f1] flex items-center pl-[5px] pr-1 pb-[2px]">
                <h2 class="flex-1 text-[15px] leading-5">기본 트레이</h2>
                <button aria-label="고정" class="mr-2"><svg class="w-2 h-3" viewBox="0 0 8 12"><path d="M2 7V2h4v5M0 7h8M4 7v4" fill="none" stroke="#000" stroke-width="1.500" /></svg></button>
                <button aria-label="닫기" class="w-3 h-3 bg-[#c0504d] text-white grid place-items-center"><svg class="size-[6px]" viewBox="0 0 6 6"><path d="M0 0l6 6M6 0L0 6" stroke="#fff" stroke-width="1.500" /></svg></button>
            </header>
            <div class="flex flex-1 min-h-0">
                <div class="w-[277px] shrink-0 flex flex-col border-r border-white">
                    <!-- Entity info -->
                    <section class="h-[175px] shrink-0">
                        <div class="flex justify-between pl-[11px] pr-2 h-5 pt-[1px]">
                            <span class="text-xs font-medium">면</span>
                            <button aria-label="자세히"><svg class="w-3 h-[17px]" viewBox="0 0 12 17"><path d="M0 0h12v8H0z" fill="#fff" stroke="#aaa" /><path d="M2 1h8L6 5zM0 7h12v10H0z" /><path d="M6 9v6M3 12h6" stroke="#fff" stroke-width="1.500" /></svg></button>
                        </div>
                        <div class="mt-1 ml-[2px] mr-7 border-t border-[#999]"></div>
                        <div class="flex pl-[7px] pt-[9px]">
                            <div class="w-[35px] h-[60px] mr-[2px] border border-[#999] pt-3"><svg class="w-full h-8" viewBox="0 0 32 32" preserveAspectRatio="none"><path d="M0 0h32v32H0z" fill="#fff" /><path d="M0 0l32 32H0z" fill="#a5b2bb" /></svg></div>
                            <div class="w-[35px] h-[60px] border border-[#999] pt-3"><svg class="w-full h-8" viewBox="0 0 32 32" preserveAspectRatio="none"><path d="M0 0h32v32H0z" fill="#fff" /><path d="M0 0l32 32H0z" fill="#a5b2bb" /></svg></div>
                            <div class="flex flex-col gap-1 flex-1 pr-3">
                                <div class="flex items-center">
                                    <label for="layer" class="flex-1 text-right pr-[5px] text-[13px]">레이어(<u>L</u>):</label>
                                    <div class="w-[118px] h-6 bg-white border-2 border-[#777] border-r-[#ddd] border-b-[#ddd] flex">
                                        <select id="layer" class="appearance-none flex-1 min-w-0 pl-[2px] outline-none bg-white"><option>Layer0</option></select>
                                        <span class="w-5 bg-[#f0f0f0] border-r-2 border-b-2 border-[#888] grid place-items-center"><svg class="w-[10px] h-[6px]"><use href="#caret" /></svg></span>
                                    </div>
                                </div>
                                <div class="flex items-center">
                                    <label for="area" class="flex-1 text-right pr-[5px] text-[13px]">영역:</label>
                                    <input id="area" readonly value="1600 mm²" class="w-[118px] h-6 pl-[2px] border-2 border-[#777] border-r-white border-b-white bg-[#f0f0f0] outline-none">
                                </div>
                            </div>
                        </div>
                    </section>

                    <!-- Materials -->
                    <header class="h-[23px] shrink-0 border border-[#aaa] bg-linear-to-b from-[#ececec] to-[#b2b2b2] flex items-center pl-2 pr-[2px]">
                        <svg class="w-3 h-[10px]" viewBox="0 0 12 10"><path d="M1 1h10L6 9z" /></svg>
                        <h3 class="flex-1 pl-[6px] pb-[2px] text-base leading-5">재질</h3>
                        <button aria-label="닫기" class="size-4 border border-[#999] bg-[#e8e8e8] grid place-items-center"><svg class="size-[6px]" viewBox="0 0 6 6"><path d="M0 0l6 6M6 0L0 6" stroke="#000" stroke-width="1.500" /></svg></button>
                    </header>
                    <div class="h-[93px] shrink-0 flex pl-[2px] pt-[2px] border-b border-[#999]">
                        <div class="w-[77px] h-[87px] border border-[#999] pt-[5px]"><svg class="w-full h-[75px]" viewBox="0 0 75 75" preserveAspectRatio="none"><path d="M0 0h75v75H0z" fill="#fff" /><path d="M0 0l75 75H0z" fill="#a5b2bb" /></svg></div>
                        <input aria-label="재질 이름" readonly value="기본값" class="w-[161px] h-[23px] ml-[3px] pl-[2px] pb-[2px] border-2 border-[#777] border-r-white border-b-white bg-[#f0f0f0] text-[#777] outline-none">
                        <div class="flex-1 flex flex-col items-center pt-1 pl-[2px]">
                            <button aria-label="보조 창"><svg class="w-3 h-[17px]" viewBox="0 0 12 17"><path d="M0 9h12v8H0z" fill="#fff" stroke="#aaa" /><path d="M2 15h8L6 11zM0 0h12v10H0z" /><path d="M3 5h6" stroke="#fff" stroke-width="2" /></svg></button>
                            <button aria-label="재질 만들기" class="mt-[10px]"><svg class="w-5 h-[22px]" viewBox="0 0 20 22"><path d="M2 5l9-4 8 3v11l-8 6-9-6z" fill="#222" /><path d="M2 5l9-4 8 3-8 4z" fill="#d8d6ad" stroke="#222" /><path d="M12 12l7-4M12 16l7-4" stroke="#999" /><circle cx="6" cy="16" r="5" fill="#fff" stroke="#111" stroke-width="1.300" /><path d="M6 13v6M3 16h6" stroke="#111" stroke-width="1.300" /></svg></button>
                            <svg class="w-[26px] h-[26px] mt-[6px]" viewBox="0 0 26 26"><path d="M0 0h26v26H0z" fill="#fff" /><path d="M0 0l26 26H0z" fill="#a5b2bb" /></svg>
                        </div>
                    </div>
                    <div class="h-[31px] shrink-0 flex items-end pt-[7px]">
                        <button class="w-[51px] h-6 border-t border-l border-t-white border-l-white border-r-2 border-r-[#777] text-left pl-[7px] pb-1">선택</button>
                        <button class="w-[46px] h-[22px] border-t border-t-white border-r-2 border-r-[#777] text-left pl-1">편집</button>
                        <button aria-label="샘플 페인트" class="ml-auto mr-1 self-start"><svg class="size-5" viewBox="0 0 20 20"><path d="M1 19l2-5 8-8 3 3-8 8z" fill="#f1f1f1" stroke="#333" /><path d="M1 19l2-5 2-2 3 3-2 2z" fill="#e2b63c" /><path d="M9 5l2-1 4-4q4 0 4 4l-4 4v3z" fill="#333" /></svg></button>
                    </div>
                    <div class="h-[35px] shrink-0 flex items-center pl-[9px] pb-[2px] border-b border-[#999]">
                        <button aria-label="뒤로" class="w-[14px] mr-[14px]"><svg class="w-[14px] h-4"><use href="#nav-back" /></svg></button>
                        <button aria-label="앞으로" class="w-[14px] mr-[11px]"><svg class="w-[14px] h-4"><use href="#nav-next" /></svg></button>
                        <button aria-label="모델 내" class="mr-[6px]"><svg class="size-5"><use href="#home" /></svg></button>
                        <div class="w-[157px] h-[26px] bg-white border-2 border-[#777] border-r-[#ddd] border-b-[#ddd] flex">
                            <select aria-label="재질 모음" class="appearance-none flex-1 min-w-0 pl-[3px] outline-none bg-white"><option>색상</option></select>
                            <span class="w-5 bg-[#f0f0f0] border-r-2 border-b-2 border-[#888] grid place-items-center"><svg class="w-[10px] h-[6px]"><use href="#caret" /></svg></span>
                        </div>
                        <button aria-label="세부 정보" class="ml-[9px]"><svg class="w-4 h-[18px]"><use href="#detail" /></svg></button>
                    </div>
                    <div class="flex-1 min-h-0 bg-white flex">
                        <div class="flex-1 overflow-hidden pl-[3px] pt-[2px]">
                            <div class="grid grid-cols-[62px_62px_62px] auto-rows-[62px] gap-[2px]">
                                <button aria-label="색상 A01" class="border border-[#999] p-[1px] bg-[#ffcccc] bg-clip-content"></button>
                                <button aria-label="색상 A02" class="border border-[#999] p-[1px] bg-[#ff9999] bg-clip-content"></button>
                                <button aria-label="색상 A03" class="border border-[#999] p-[1px] bg-[#ff6666] bg-clip-content"></button>
                                <button aria-label="색상 A04" class="border border-[#999] p-[1px] bg-[#ff3333] bg-clip-content"></button>
                                <button aria-label="색상 A05" class="border border-[#999] p-[1px] bg-[#ff0000] bg-clip-content"></button>
                                <button aria-label="색상 A06" class="border border-[#999] p-[1px] bg-[#cc0000] bg-clip-content"></button>
                                <button aria-label="색상 A07" class="border border-[#999] p-[1px] bg-[#990000] bg-clip-content"></button>
                                <button aria-label="색상 A08" class="border border-[#999] p-[1px] bg-[#660000] bg-clip-content"></button>
                                <button aria-label="색상 B01" class="border border-[#999] p-[1px] bg-[#ffd9cc] bg-clip-content"></button>
                                <button aria-label="색상 B02" class="border border-[#999] p-[1px] bg-[#ffb399] bg-clip-content"></button>
                                <button aria-label="색상 B03" class="border border-[#999] p-[1px] bg-[#ff8f66] bg-clip-content"></button>
                                <button aria-label="색상 B04" class="border border-[#999] p-[1px] bg-[#ff6933] bg-clip-content"></button>
                                <button aria-label="색상 B05" class="border border-[#999] p-[1px] bg-[#ff4400] bg-clip-content"></button>
                                <button aria-label="색상 B06" class="border border-[#999] p-[1px] bg-[#cc3600] bg-clip-content"></button>
                                <button aria-label="색상 B07" class="border border-[#999] p-[1px] bg-[#992900] bg-clip-content"></button>
                                <button aria-label="색상 B08" class="border border-[#999] p-[1px] bg-[#661b00] bg-clip-content"></button>
                                <button aria-label="색상 C01" class="border border-[#999] p-[1px] bg-[#ffe6cc] bg-clip-content"></button>
                                <button aria-label="색상 C02" class="border border-[#999] p-[1px] bg-[#ffcc99] bg-clip-content"></button>
                            </div>
                        </div>
                        <div class="w-5 bg-[#f0f0f0] flex flex-col items-center">
                            <svg class="w-[10px] h-[7px] my-[7px]"><use href="#up" /></svg>
                            <div class="w-full h-[21px] bg-[#cdcdcd]"></div>
                            <svg class="w-[10px] h-[7px] mt-auto mb-[7px]"><use href="#down" /></svg>
                        </div>
                    </div>
                    <div class="h-[9px] shrink-0 pt-1"><div class="border-t-2 border-[#777]"></div></div>
                    <div class="h-[23px] shrink-0 bg-[#e3e3e3] border-y border-[#999] flex items-center pl-1 pb-[1px]">선택</div>
                    <div class="h-[36px] shrink-0 flex items-center pl-[9px] pb-[2px] border-b border-[#999]">
                        <button aria-label="뒤로" class="w-[14px] mr-[14px]"><svg class="w-[14px] h-4"><use href="#nav-back" /></svg></button>
                        <button aria-label="앞으로" class="w-[14px] mr-[11px]"><svg class="w-[14px] h-4"><use href="#nav-next" /></svg></button>
                        <button aria-label="모델 내" class="mr-[6px]"><svg class="size-5"><use href="#home" /></svg></button>
                        <div class="w-[157px] h-[26px] bg-white border-2 border-[#777] border-r-[#ddd] border-b-[#ddd] flex">
                            <select aria-label="보조 재질 모음" class="appearance-none flex-1 min-w-0 mx-[3px] outline-none bg-white border-b border-black"><option>재질</option></select>
                            <span class="w-5 bg-[#f0f0f0] border-r-2 border-b-2 border-[#888] grid place-items-center"><svg class="w-[10px] h-[6px]"><use href="#caret" /></svg></span>
                        </div>
                        <button aria-label="세부 정보" class="ml-[9px]"><svg class="w-4 h-[18px]"><use href="#detail" /></svg></button>
                    </div>
                    <div class="h-[105px] shrink-0 bg-white flex">
                        <div class="flex-1 overflow-hidden pl-[3px] pt-[2px]">
                            <div class="grid grid-cols-[62px_62px_62px] auto-rows-[62px] gap-[2px]">
                                <button class="relative border border-[#999] flex justify-center pt-3"><svg class="w-10 h-[34px]"><use href="#folder" /></svg><span class="absolute left-0 bottom-1 bg-white px-[3px] leading-[14px]">3D 인쇄</span></button>
                                <button class="relative border border-[#999] flex justify-center pt-3"><svg class="w-10 h-[34px]"><use href="#folder" /></svg><span class="absolute left-0 bottom-1 bg-white px-[3px] leading-[14px]">금속</span></button>
                                <button class="relative border border-[#999] flex justify-center pt-3"><svg class="w-10 h-[34px]"><use href="#folder" /></svg><span class="absolute left-0 bottom-1 bg-white px-[3px] leading-[14px]">목재</span></button>
                                <button aria-label="폴더" class="border border-[#999] flex justify-center pt-3"><svg class="w-10 h-[34px]"><use href="#folder" /></svg></button>
                                <button aria-label="폴더" class="border border-[#999] flex justify-center pt-3"><svg class="w-10 h-[34px]"><use href="#folder" /></svg></button>
                                <button aria-label="폴더" class="border border-[#999] flex justify-center pt-3"><svg class="w-10 h-[34px]"><use href="#folder" /></svg></button>
                            </div>
                        </div>
                        <div class="w-5 bg-[#f0f0f0] flex flex-col items-center">
                            <svg class="w-[10px] h-[7px] my-[7px]"><use href="#up" /></svg>
                            <div class="w-full h-[21px] bg-[#cdcdcd]"></div>
                            <svg class="w-[10px] h-[7px] mt-auto mb-[7px]"><use href="#down" /></svg>
                        </div>
                    </div>
                    <div class="h-[6px] shrink-0 border border-[#aaa]"></div>
                </div>
                <div class="flex-1 flex flex-col items-center pt-[9px]">
                    <svg class="w-[10px] h-[7px]"><use href="#up" /></svg>
                    <div class="w-[19px] h-[21px] mt-[18px] bg-[#cdcdcd]"></div>
                    <svg class="w-[10px] h-[7px] mt-auto mb-[7px]"><use href="#down" /></svg>
                </div>
            </div>
        </aside>
    </div>

    <!-- Status bar -->
    <footer class="h-[26px] shrink-0 bg-[#f0f0f0] flex items-center overflow-hidden pt-2 whitespace-nowrap">
        <button aria-label="위치" class="ml-[7px]"><svg class="size-[18px]" viewBox="0 0 18 18"><circle cx="9" cy="9" r="8" fill="none" stroke="#999" stroke-width="1.300" /><path d="M9 15L6 8q0-4 3-4t3 4z" fill="#999" /></svg></button>
        <button aria-label="제작자" class="ml-[17px]"><svg class="size-[18px]" viewBox="0 0 18 18"><circle cx="9" cy="9" r="8" fill="none" stroke="#111" stroke-width="1.800" /><circle cx="9" cy="4.500" r="1.500" /><path d="M7 7h4v4h-1v4H8v-4H7z" /></svg></button>
        <button aria-label="로그인" class="ml-[17px]"><svg class="size-[18px]" viewBox="0 0 18 18"><circle cx="9" cy="9" r="8" fill="#ddd" stroke="#999" stroke-width="1.300" /><circle cx="9" cy="6.500" r="3" fill="#888" /><path d="M3 15q1-5 6-5t6 5q-6 4-12 0z" fill="#888" /></svg></button>
        <span class="ml-3 h-[14px] border-l border-[#999]"></span>
        <p class="flex-1 pl-[11px] text-[17px] leading-5">밀거나 끌 면을 선택합니다. Ctrl = 새 시작 면 만들기 토글</p>
        <span class="h-[14px] border-l border-[#999]"></span>
        <label for="distance" class="pl-[11px] text-[17px] leading-5">거리</label>
        <input id="distance" value="2140mm" class="w-[250px] h-[23px] ml-[9px] mr-[6px] pl-[2px] border border-b-0 border-[#a8b8d0] bg-white text-[15px] leading-5 outline-none">
    </footer>
    <div class="h-[42px] shrink-0 bg-black"></div>
</body>

</html>
